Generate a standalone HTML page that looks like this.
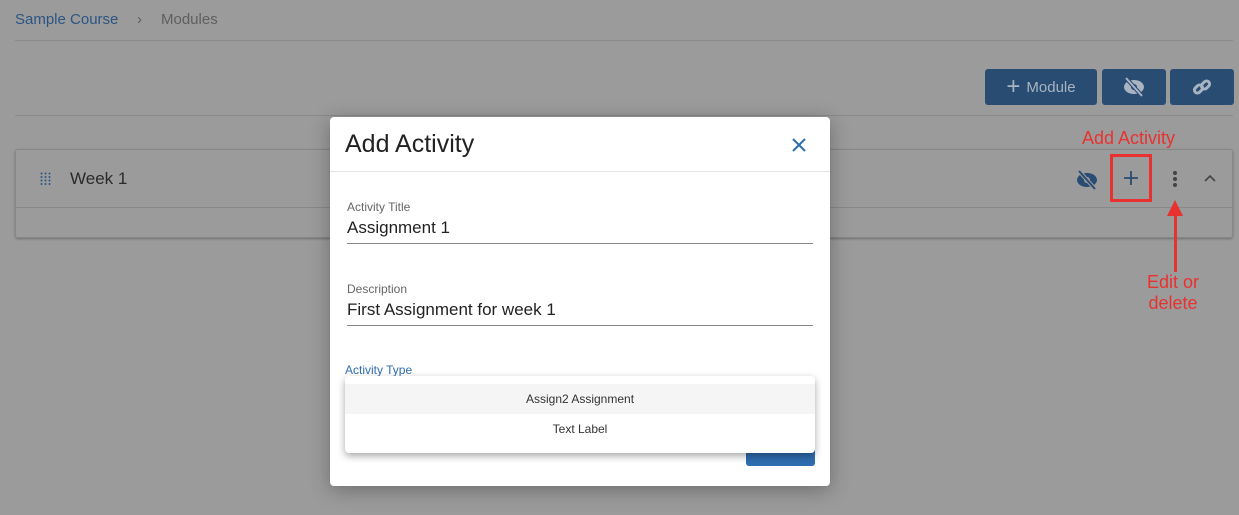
<!DOCTYPE html>
<html><head><style>
*{box-sizing:border-box;margin:0;padding:0}
body{width:1239px;height:515px;background:#9b9b9b;font-family:"Liberation Sans",sans-serif;position:relative;overflow:hidden}
.abs{position:absolute}
.btn{position:absolute;top:69px;height:36px;background:#294c73;border-radius:3px;color:#a8b4c2;display:flex;align-items:center;justify-content:center;font-size:15px}
.red{color:#e8322f;font-size:18px}
</style></head><body>
<div class="abs" style="left:15px;top:11px;font-size:15px;color:#2c5582">Sample Course</div>
<div class="abs" style="left:137px;top:11px;font-size:15px;color:#5f5f5f">›</div>
<div class="abs" style="left:161px;top:11px;font-size:15px;color:#5f5f5f">Modules</div>
<div class="abs" style="left:15px;top:40px;width:1218px;height:1px;background:#8a8a8a"></div>
<div class="btn" style="left:985px;width:112px"><span style="font-size:24px;margin-right:6px;line-height:1">+</span>Module</div>
<div class="btn" style="left:1102px;width:64px"><svg width="24" height="20" viewBox="0 0 24 20"><ellipse cx="12" cy="10" rx="10" ry="7" fill="#a8b4c2"/><circle cx="12" cy="10" r="3" fill="#294c73"/><path d="M4 1L20 19" stroke="#294c73" stroke-width="4"/><path d="M4 1L20 19" stroke="#a8b4c2" stroke-width="2"/></svg></div>
<div class="btn" style="left:1170px;width:64px"><svg width="20" height="20" viewBox="0 0 20 20" fill="none" stroke="#a8b4c2" stroke-width="3"><rect x="2" y="9" width="9" height="6" rx="3" transform="rotate(-45 6.5 12)"/><rect x="9" y="5" width="9" height="6" rx="3" transform="rotate(-45 13.5 8)"/></svg></div>
<div class="abs" style="left:15px;top:115px;width:1218px;height:1px;background:#8a8a8a"></div>
<div class="abs" style="left:15px;top:149px;width:1218px;height:89px;border:1px solid #888;border-radius:3px;box-shadow:0 1px 2px rgba(0,0,0,.3)"></div>
<div class="abs" style="left:15px;top:207px;width:1218px;height:1px;background:#888"></div>
<svg class="abs" style="left:40px;top:172px" width="12" height="14" viewBox="0 0 12 14" fill="#2c5582"><g id="r"><circle cx="1.5" cy="1.5" r="1"/><circle cx="5.5" cy="1.5" r="1"/><circle cx="9.5" cy="1.5" r="1"/></g><use href="#r" y="3.5"/><use href="#r" y="7"/><use href="#r" y="10.5"/></svg>
<div class="abs" style="left:70px;top:169px;font-size:17px;color:#2a2a2a">Week 1</div>
<svg class="abs" style="left:1075px;top:170px" width="24" height="20" viewBox="0 0 24 20"><ellipse cx="12" cy="10" rx="10" ry="7" fill="#294c73"/><circle cx="12" cy="10" r="3" fill="#9b9b9b"/><path d="M4 1L20 19" stroke="#9b9b9b" stroke-width="4"/><path d="M4 1L20 19" stroke="#294c73" stroke-width="2"/></svg>
<div class="abs" style="left:1110px;top:154px;width:42px;height:48px;border:3px solid #e8322f"></div>
<svg class="abs" style="left:1123px;top:170px" width="16" height="16" viewBox="0 0 16 16"><path d="M8 1V15M1 8H15" stroke="#294c73" stroke-width="1.8"/></svg>
<div class="abs" style="left:1173px;top:171px;width:4px;height:4px;border-radius:2px;background:#444;box-shadow:0 6px 0 #444,0 12px 0 #444"></div>
<svg class="abs" style="left:1204px;top:174px" width="12" height="8" viewBox="0 0 12 8"><path d="M1 7L6 2L11 7" fill="none" stroke="#444" stroke-width="1.6"/></svg>
<div class="abs red" style="left:1082px;top:128px">Add Activity</div>
<div class="abs" style="left:1174px;top:210px;width:3px;height:62px;background:#e8322f"></div>
<div class="abs" style="left:1167px;top:200px;width:0;height:0;border-left:8px solid transparent;border-right:8px solid transparent;border-bottom:16px solid #e8322f"></div>
<div class="abs red" style="left:1147px;top:272px;text-align:center;line-height:21px">Edit or<br>delete</div>

<div class="abs" style="left:330px;top:117px;width:500px;height:369px;background:#fff;border-radius:4px;box-shadow:0 4px 20px rgba(0,0,0,.3)">
<div class="abs" style="left:15px;top:13px;font-size:25px;color:#222">Add Activity</div>
<svg class="abs" style="left:462px;top:21px" width="14" height="14" viewBox="0 0 14 14"><path d="M1 1L13 13M13 1L1 13" stroke="#2f6db0" stroke-width="2"/></svg>
<div class="abs" style="left:0;top:54px;width:500px;height:1px;background:#e3e3e3"></div>
<div class="abs" style="left:17px;top:83px;font-size:12px;color:#666">Activity Title</div>
<div class="abs" style="left:17px;top:101px;font-size:17px;color:#222">Assignment 1</div>
<div class="abs" style="left:17px;top:126px;width:466px;height:1px;background:#888"></div>
<div class="abs" style="left:17px;top:165px;font-size:12px;color:#666">Description</div>
<div class="abs" style="left:17px;top:183px;font-size:17px;color:#222">First Assignment for week 1</div>
<div class="abs" style="left:17px;top:208px;width:466px;height:1px;background:#888"></div>
<div class="abs" style="left:15px;top:246px;font-size:12px;color:#2f6db0">Activity Type</div>
<div class="abs" style="left:416px;top:320px;width:69px;height:29px;background:#2f6db0;border-radius:3px"></div>
<div class="abs" style="left:15px;top:259px;width:470px;height:77px;background:#fff;border-radius:4px;box-shadow:0 3px 8px rgba(0,0,0,.35)">
<div style="margin-top:8px;height:30px;background:#f5f5f5;text-align:center;line-height:30px;font-size:12px;color:#333">Assign2 Assignment</div>
<div style="height:30px;text-align:center;line-height:30px;font-size:12px;color:#333">Text Label</div>
</div>
</div>
</body></html>
